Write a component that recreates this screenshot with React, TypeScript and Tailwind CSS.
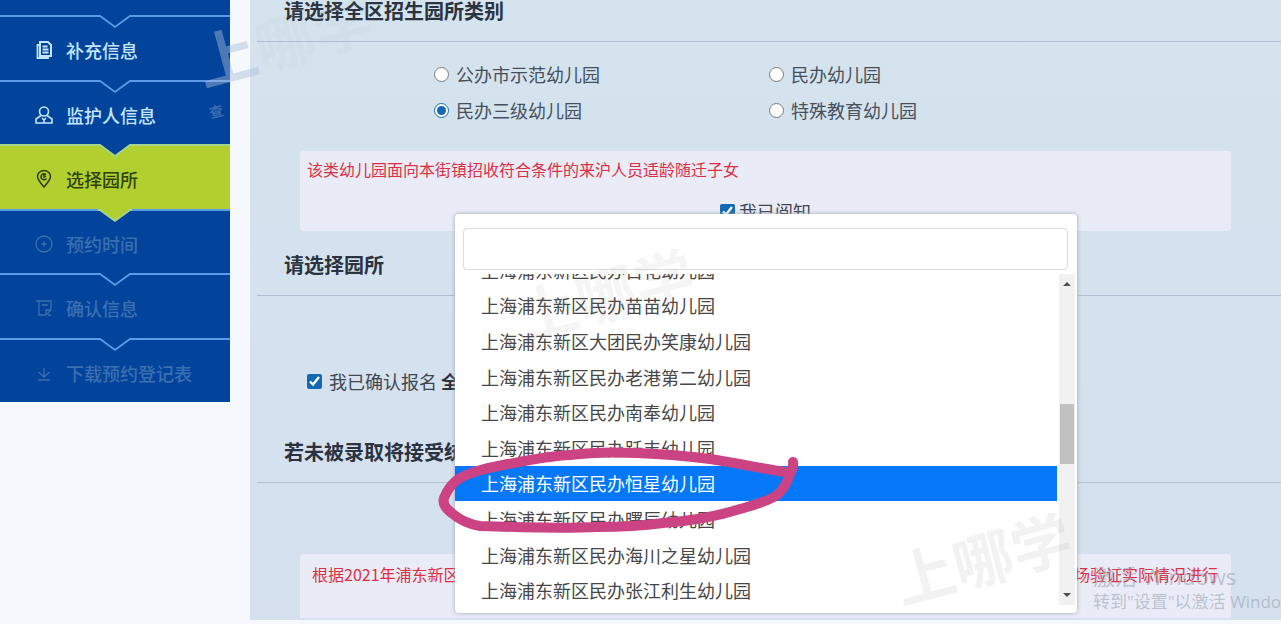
import { useState } from 'react';

type StepState = 'done' | 'active' | 'pending';

const steps: { label: string; icon: string; state: StepState }[] = [
  { label: '补充信息', icon: 'doc', state: 'done' },
  { label: '监护人信息', icon: 'user', state: 'done' },
  { label: '选择园所', icon: 'pin', state: 'active' },
  { label: '预约时间', icon: 'clock', state: 'pending' },
  { label: '确认信息', icon: 'confirm', state: 'pending' },
  { label: '下载预约登记表', icon: 'download', state: 'pending' },
];

const categories = ['公办市示范幼儿园', '民办幼儿园', '民办三级幼儿园', '特殊教育幼儿园'];

const schools = [
  '上海浦东新区民办百花幼儿园',
  '上海浦东新区民办苗苗幼儿园',
  '上海浦东新区大团民办笑康幼儿园',
  '上海浦东新区民办老港第二幼儿园',
  '上海浦东新区民办南奉幼儿园',
  '上海浦东新区民办跃丰幼儿园',
  '上海浦东新区民办恒星幼儿园',
  '上海浦东新区民办曙辰幼儿园',
  '上海浦东新区民办海川之星幼儿园',
  '上海浦东新区民办张江利生幼儿园',
];

function StepIcon({ name }: { name: string }) {
  return (
    <svg viewBox="0 0 20 20" className="h-5 w-5 shrink-0" fill="none" stroke="currentColor" strokeWidth="1.6">
      {name === 'doc' && (
        <>
          <path d="M6 2h8l3 3v11H6z" strokeWidth="2" />
          <path d="M6 5H3.500v13H14v-2M8.500 6.500h5M8.500 9.500h6M8.500 12.500h6" strokeWidth="1.800" />
        </>
      )}
      {name === 'user' && (
        <>
          <circle cx="10" cy="6.500" r="4.500" />
          <path d="M7 10.500 2 14v4h16v-4l-5-3.500M8 13l2 2 2-2M10 15v3" />
        </>
      )}
      {name === 'pin' && (
        <>
          <path d="M10 18C6 13.500 3.500 10.500 3.500 7.500a6.500 6 0 0 1 13 0C16.500 10.500 14 13.500 10 18z" />
          <path d="M12 5.500a3 3 0 1 0 .5 4M10 5v3l2-1" />
        </>
      )}
      {name === 'clock' && (
        <>
          <circle cx="10" cy="10" r="8" strokeWidth="1.300" />
          <path d="M10 7v6M7.500 10h5" strokeWidth="1.300" />
        </>
      )}
      {name === 'confirm' && (
        <path d="M2 3h15v9M5 3v14h6M8 7h6M17 12l-5 5v-5h5M14 17h3" strokeWidth="1.300" />
      )}
      {name === 'download' && <path d="M10 5v8M4.500 9l5.500 5 5.500-5M4 17h12" strokeWidth="1.300" />}
    </svg>
  );
}

const notchFill = ['fill-[#02449c]', 'fill-[#02449c]', 'fill-[#02449c]', 'fill-[#b1d030]', 'fill-[#02449c]', 'fill-[#02449c]'];

function Sidebar() {
  return (
    <nav className="w-[230px] shrink-0 self-start bg-[#02449c] pt-[15px]">
      <ol className="flex h-[387px] flex-col">
        {steps.map((step, i) => (
          <li
            key={step.label}
            className={`relative flex-1 border-t-2 ${
              step.state === 'active'
                ? 'border-[#a5d58c] bg-[#b1d030] text-[#30420c]'
                : step.state === 'done'
                  ? 'border-[#5b9be8] text-[#c5e4ff]'
                  : 'border-[#5b9be8] text-[#3a6fb0]'
            }`}
          >
            <svg viewBox="0 0 34 14" className="absolute -top-0.5 left-[98px] h-3.5 w-[34px]">
              <path d="M0 0h34L17 12z" className={notchFill[i]} />
              <path
                d="M0 1h2l15 11L32 1h2"
                fill="none"
                className={i === 2 || i === 3 ? 'stroke-[#a5d58c]' : 'stroke-[#5b9be8]'}
                strokeWidth="1.800"
              />
            </svg>
            <a href="#" className="flex h-full items-center gap-3 pl-[34px] pt-1 text-lg font-medium">
              <StepIcon name={step.icon} />
              {step.label}
            </a>
          </li>
        ))}
      </ol>
    </nav>
  );
}

function SectionTitle({ children }: { children: string }) {
  return (
    <h2 className="ml-[7px] border-b border-[#b3c1d6] pb-4 pl-[27px] text-xl leading-7 font-bold text-[#2b3340]">
      {children}
    </h2>
  );
}

function SchoolDropdown() {
  const [keyword, setKeyword] = useState('');
  const [selected, setSelected] = useState(6);

  return (
    <div className="absolute top-[214px] right-[204px] left-[205px] rounded-sm bg-white pt-3.5 pb-2 shadow-[0_0_4px_#9aa3b0]">
      <input
        type="text"
        aria-label="搜索园所"
        value={keyword}
        onChange={(e) => setKeyword(e.target.value)}
        className="mx-2 mb-1 block h-[42px] w-[calc(100%-17px)] rounded-sm border border-[#dcdcdc] bg-white px-3 text-lg outline-none"
      />
      <div className="flex h-[331px] overflow-hidden">
        <ul role="listbox" aria-label="园所" className="-mt-[22px] flex h-[356px] flex-1 flex-col">
          {schools.map((name, i) => (
            <li
              key={name}
              role="option"
              aria-selected={i === selected}
              onClick={() => setSelected(i)}
              className={`flex flex-1 cursor-pointer items-center pl-[26px] text-lg leading-none ${
                i === selected ? 'bg-[#0478f8] text-white' : 'text-[#474747]'
              }`}
            >
              {name}
            </li>
          ))}
        </ul>
        <div className="mx-0.5 flex w-4 flex-col items-center justify-between bg-[#f1f1f1] py-2">
          <div className="border-x-4 border-b-4 border-x-transparent border-b-[#505050]" />
          <div className="-mt-3 h-[60px] w-3.5 bg-[#c1c1c1]" />
          <div className="border-x-4 border-t-4 border-x-transparent border-t-[#505050]" />
        </div>
      </div>

      {/* hand-drawn marker around the chosen school */}
      <svg
        viewBox="0 0 370 92"
        className="pointer-events-none absolute top-[230px] -left-5 h-[92px] w-[370px]"
        fill="none"
        stroke="#cc4383"
        strokeLinecap="round"
        strokeLinejoin="round"
      >
        <path
          d="M358 18C359 23 357 26 355 30C352 39 348 46 342 51C332 58 319 61 305 65C280 73 256 77 228 79C206 82 184 83 162 83C123 85 84 83 45 82C33 80 25 76 18 70C11 65 7 60 9 54C12 46 17 39 25 34C38 27 53 24 68 21C90 17 112 12 135 11C157 8 180 8 202 9C227 10 252 12 275 15C302 19 329 25 355 29"
          strokeWidth="10"
        />
      </svg>
    </div>
  );
}

function Watermarks() {
  return (
    <div aria-hidden="true" className="pointer-events-none absolute inset-0 overflow-hidden font-bold">
      <span className="absolute top-2 left-[194px] -rotate-15 text-6xl leading-none text-[#8a94a6]/5">
        <span className="text-[#a9bdd8]/45">上</span>哪学
      </span>
      <span className="absolute top-[104px] left-[209px] -rotate-15 text-sm leading-none text-[#c8d2e1]/30">查</span>
      <span className="absolute top-[262px] left-[515px] -rotate-15 text-6xl leading-none text-[#808080]/8">上哪学</span>
      <span className="absolute top-[526px] left-[892px] -rotate-15 text-6xl leading-none text-[#808080]/10">上哪学</span>
    </div>
  );
}

export default function App() {
  const [category, setCategory] = useState('民办三级幼儿园');

  return (
    <div className="relative flex min-h-screen gap-5 overflow-hidden bg-[#f5f8fc] pb-1 font-['Noto_Sans_CJK_SC',sans-serif]">
      <Sidebar />
      <main className="relative min-w-0 flex-1 bg-linear-to-b from-[#d4e3ee] to-[#d6e0ef]">
        <div className="-mt-[3px]">
          <SectionTitle>请选择全区招生园所类别</SectionTitle>
        </div>

        <fieldset className="mt-[14px] ml-[184px] grid w-[670px] grid-cols-2">
          <legend className="sr-only">园所类别</legend>
          {categories.map((name) => (
            <label key={name} className="flex h-9 items-center gap-[7px] text-lg text-[#46505c]">
              <input
                type="radio"
                name="category"
                checked={category === name}
                onChange={() => setCategory(name)}
                className="h-[15px] w-[15px] accent-[#1268b3]"
              />
              {name}
            </label>
          ))}
        </fieldset>

        <section className="mx-[50px] mt-[23px] h-20 rounded-sm bg-[#e9ecf6] px-[7px] pt-[6px]">
          <p className="text-base text-[#dc2f45]">该类幼儿园面向本街镇招收符合条件的来沪人员适龄随迁子女</p>
          <label className="mt-4 flex items-center justify-center gap-1 text-lg text-[#3f4650]">
            <input type="checkbox" defaultChecked className="h-[15px] w-[15px] accent-[#1268b3]" />
            我已阅知
          </label>
        </section>

        <div className="mt-[20px]">
          <SectionTitle>请选择园所</SectionTitle>
        </div>

        <label className="mt-[71px] ml-[57px] flex items-center gap-[7px] text-lg text-[#3f4650]">
          <input type="checkbox" defaultChecked className="h-[15px] w-[15px] accent-[#1268b3]" />
          <span>
            我已确认报名 <b className="text-[#2b3340]">全</b>
          </span>
        </label>

        <div className="mt-[43px]">
          <SectionTitle>若未被录取将接受统</SectionTitle>
        </div>

        <section className="mx-[50px] mt-[71px] flex h-16 justify-between rounded-t-sm bg-[#e9ecf6] pt-2 pr-[13px] pl-3 text-base text-[#dc2f45]">
          <p>根据2021年浦东新区</p>
          <p>场验证实际情况进行</p>
        </section>

        <SchoolDropdown />
      </main>

      <div className="pointer-events-none absolute top-[562px] left-[calc(100%-188px)] font-['Open_Sans','Noto_Sans_CJK_SC',sans-serif] whitespace-nowrap text-[#8f98a6]/50">
        <p className="text-[22px] leading-7">激活 Windows</p>
        <p className="text-[17px] leading-6">转到&quot;设置&quot;以激活 Windows</p>
      </div>
      <Watermarks />
    </div>
  );
}
